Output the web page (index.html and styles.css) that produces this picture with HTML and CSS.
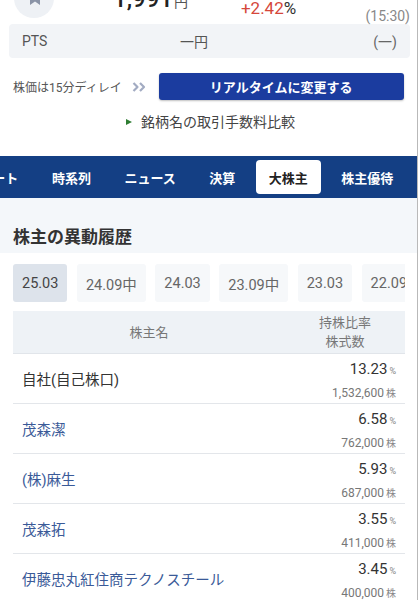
FILE: index.html
```html
<!DOCTYPE html>
<html lang="ja">
<head>
<meta charset="utf-8">
<title>大株主</title>
<link rel="stylesheet" href="styles.css">
</head>
<body>
<div class="page">
  <div class="quote">
    <div class="fav">
      <svg class="fav-icon" width="10" height="12" viewBox="0 0 10 12"><path d="M0 0H10V12L5 8.6L0 12Z" fill="#8b94a7"/></svg>
    </div>
    <div class="price"><span class="price-num">1,991</span><span class="price-yen">円</span></div>
    <div class="change"><span class="up">+2.42</span>%</div>
    <div class="time">(15:30)</div>
  </div>

  <div class="pts">
    <span class="pts-label">PTS</span>
    <span class="pts-price">一円</span>
    <span class="pts-chg">(一)</span>
  </div>

  <div class="delay">
    <span class="delay-text">株価は15分ディレイ</span>
    <svg class="chev" width="14" height="10" viewBox="0 0 14 10"><path d="M1.5 1L5.5 5L1.5 9M8 1L12 5L8 9" fill="none" stroke="#a2abc2" stroke-width="2.2" stroke-linejoin="round"/></svg>
    <a class="rt-btn">リアルタイムに変更する</a>
  </div>

  <div class="fee"><span class="tri"></span><span>銘柄名の取引手数料比較</span></div>

  <nav class="tabs">
    <div class="tabs-inner">
      <span class="tab">チャート</span>
      <span class="tab">時系列</span>
      <span class="tab">ニュース</span>
      <span class="tab">決算</span>
      <span class="tab tab-active">大株主</span>
      <span class="tab">株主優待</span>
    </div>
  </nav>

  <section class="holders-head">
    <h2 class="title">株主の異動履歴</h2>
  </section>

  <div class="periods">
    <span class="period period-active">25.03</span>
    <span class="period">24.09中</span>
    <span class="period">24.03</span>
    <span class="period">23.09中</span>
    <span class="period">23.03</span>
    <span class="period">22.09</span>
  </div>

  <div class="table">
    <div class="thead">
      <div class="th-name">株主名</div>
      <div class="th-val">持株比率<br>株式数</div>
    </div>
    <div class="row">
      <div class="name plain">自社(自己株口)</div>
      <div class="val"><span class="pct">13.23<small>%</small></span><span class="shares">1,532,600<small>株</small></span></div>
    </div>
    <div class="row">
      <div class="name">茂森潔</div>
      <div class="val"><span class="pct">6.58<small>%</small></span><span class="shares">762,000<small>株</small></span></div>
    </div>
    <div class="row">
      <div class="name">(株)麻生</div>
      <div class="val"><span class="pct">5.93<small>%</small></span><span class="shares">687,000<small>株</small></span></div>
    </div>
    <div class="row">
      <div class="name">茂森拓</div>
      <div class="val"><span class="pct">3.55<small>%</small></span><span class="shares">411,000<small>株</small></span></div>
    </div>
    <div class="row">
      <div class="name">伊藤忠丸紅住商テクノスチール</div>
      <div class="val"><span class="pct">3.45<small>%</small></span><span class="shares">400,000<small>株</small></span></div>
    </div>
  </div>
</div>
</body>
</html>
```

FILE: styles.css
```css
* { box-sizing: border-box; margin: 0; padding: 0; }
html, body { background: #fff; }
body {
  font-family: Roboto, "Noto Sans CJK JP", sans-serif;
  color: #333;
  width: 419px;
  height: 600px;
  overflow: hidden;
}
.page {
  width: 418px;
  height: 600px;
  border-right: 1px solid #b9b9b9;
  overflow: hidden;
  background: #fff;
}

/* quote row (scrolled partly off the top) */
.quote {
  display: flex;
  align-items: flex-end;
  height: 46px;
  margin-top: -22px;
  padding: 0 7px 0 14px;
}
.fav {
  flex: none;
  width: 40px;
  height: 40px;
  margin-bottom: 6px;
  border-radius: 50%;
  background: #eef1f5;
  display: flex;
  align-items: center;
  justify-content: center;
}
.fav-icon { margin-left: 2px; margin-top: 2px; }
.price {
  display: flex;
  align-items: baseline;
  margin-left: 59px;
  margin-bottom: 13px;
}
.price-num { font-size: 24px; line-height: 24px; font-weight: 500; color: #222; }
.price-yen { font-size: 14px; line-height: 16px; color: #555; margin-left: 1px; }
.change {
  margin-left: 53px;
  margin-bottom: 6px;
  font-size: 17px;
  line-height: 20px;
  color: #333;
}
.change .up { color: #d5473b; }
.time {
  margin-left: auto;
  font-size: 14px;
  line-height: 16px;
  color: #888;
}

/* PTS */
.pts {
  display: flex;
  align-items: center;
  height: 34px;
  margin: 0 7px 0 9px;
  padding: 0 13px;
  background: #f2f4f7;
  border-radius: 4px;
  font-size: 14px;
  color: #555;
}
.pts-label { width: 158px; }
.pts-chg { margin-left: auto; color: #666; }

/* delay */
.delay {
  display: flex;
  align-items: center;
  height: 27px;
  margin-top: 15px;
  padding-left: 13px;
}
.delay-text { font-size: 12px; color: #555; }
.chev { margin-left: 10px; flex: none; }
.rt-btn {
  margin-left: 13px;
  width: 245px;
  height: 27px;
  display: flex;
  align-items: center;
  justify-content: center;
  background: #1b3c9f;
  border-radius: 3px;
  color: #fff;
  font-size: 13px;
  font-weight: 700;
  box-shadow: 0 1px 2px rgba(0,0,0,0.25);
}

/* fee link */
.fee {
  display: flex;
  align-items: center;
  justify-content: center;
  margin-top: 11px;
  padding-left: 4px;
  height: 20px;
  font-size: 14px;
  color: #444;
}
.tri {
  width: 0;
  height: 0;
  border-top: 3.5px solid transparent;
  border-bottom: 3.5px solid transparent;
  border-left: 6px solid #2e7d32;
  margin-right: 9px;
  margin-top: 2px;
}

/* tabs */
.tabs {
  margin-top: 25px;
  height: 42px;
  background: #143f84;
  padding: 4px 0 4px;
  overflow: hidden;
}
.tabs-inner {
  display: flex;
  gap: 7.5px;
  margin-left: -46.5px;
  height: 34px;
}
.tab {
  flex: none;
  display: flex;
  align-items: center;
  padding: 0 13px;
  height: 34px;
  border-radius: 4px;
  color: #fff;
  font-size: 13px;
  font-weight: 700;
}
.tab-active { background: #fff; color: #222; }

/* heading */
.holders-head {
  background: #f4f7fa;
  padding: 27px 13px 4px;
}
.title {
  font-size: 17px;
  line-height: 24px;
  font-weight: 700;
  color: #333;
}

/* periods */
.periods {
  display: flex;
  gap: 9.5px;
  margin: 11px 12px 0 13px;
  overflow: hidden;
}
.period {
  flex: none;
  height: 38px;
  padding: 0 9px;
  display: flex;
  align-items: center;
  background: #f6f8fa;
  border-radius: 3px;
  font-size: 14.5px;
  color: #666;
}
.period-active { background: #dde3eb; color: #444; }

/* table */
.table { margin: 9px 12px 0 13px; }
.thead {
  display: flex;
  align-items: center;
  height: 43px;
  background: #eef2f6;
  border-bottom: 1px solid #e1e5ea;
  font-size: 13px;
  line-height: 19px;
  color: #777;
}
.th-name { flex: 1; text-align: center; }
.th-val { width: 120px; text-align: center; }
.row {
  display: flex;
  align-items: center;
  height: 50px;
  padding: 0 9px;
  border-bottom: 1px solid #e3e6ea;
}
.name {
  flex: 1;
  font-size: 14.5px;
  color: #3a5a98;
}
.name.plain { color: #333; }
.val {
  display: flex;
  flex-direction: column;
  align-items: flex-end;
  padding-top: 5px;
  align-self: stretch;
}
.pct { font-size: 15px; line-height: 20px; color: #333; }
.pct small { font-size: 9px; color: #888; margin-left: 2px; }
.shares { margin-top: 4px; font-size: 12px; line-height: 16px; color: #777; }
.shares small { font-size: 10px; color: #888; margin-left: 2px; }
```
